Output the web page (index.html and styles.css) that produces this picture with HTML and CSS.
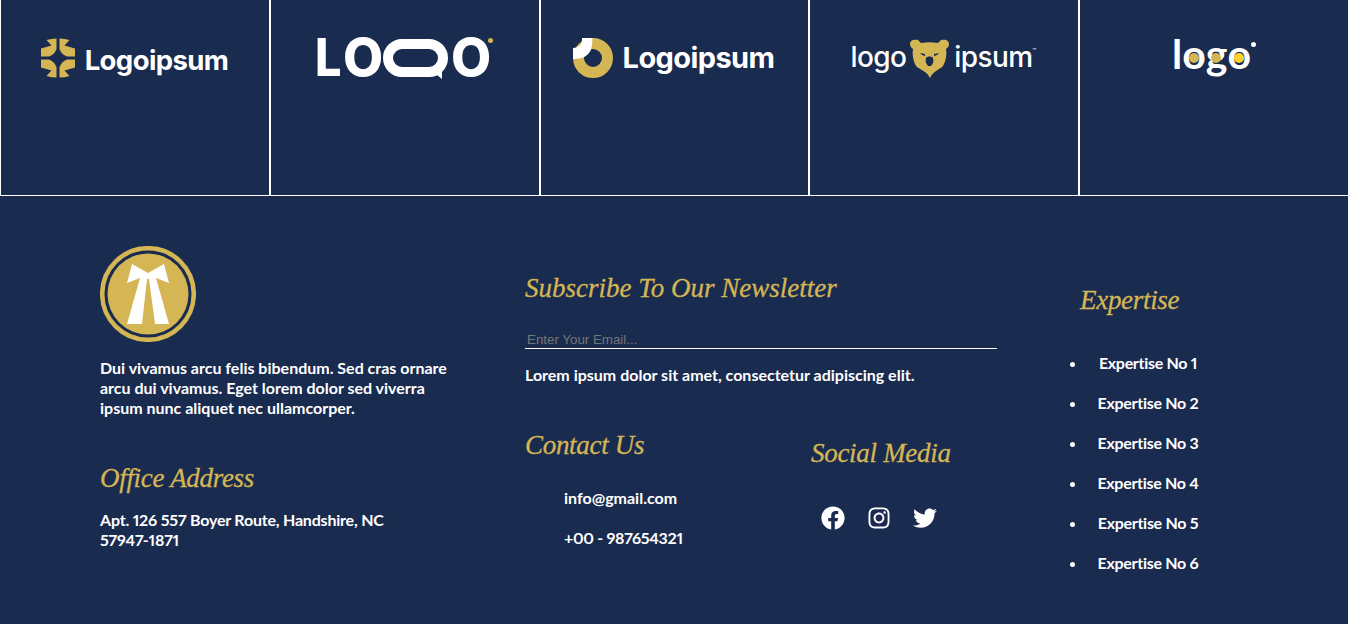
FILE: index.html
```html
<!DOCTYPE html>
<html lang="en">
<head>
  <meta charset="UTF-8">
  <meta name="viewport" content="width=device-width, initial-scale=1.0">
  <title>Footer</title>
  <link rel="stylesheet" href="styles.css">
</head>
<body>
  <!-- Partner logos -->
  <section class="logo-row">
    <div class="logo-cell">
      <div class="logo logo-one">
        <svg class="mark-one" viewBox="-18 -20 36 40">
          <g fill="#d4b654">
            <path id="petal" d="M-17-9.500-6.500-12.500-11.500-18Q-7-19.500-1.500-19.500L-1.500-9Q-3.500-3.500-9-1.500L-17-1.500Z"/>
            <use href="#petal" transform="scale(-1,1)"/>
            <use href="#petal" transform="scale(1,-1)"/>
            <use href="#petal" transform="scale(-1,-1)"/>
          </g>
        </svg>
        <span class="logo-word word-one">Logoipsum</span>
      </div>
    </div>
    <div class="logo-cell">
      <div class="logo logo-two">
        <span class="loqo-l">L</span><span class="loqo-o">O</span><span class="loqo-q"></span><span class="loqo-o">O</span>
        <i class="loqo-dot"></i>
      </div>
    </div>
    <div class="logo-cell">
      <div class="logo logo-three">
        <svg class="mark-three" viewBox="0 0 40 40">
          <circle cx="20" cy="20" r="14.5" fill="none" stroke="#d4b654" stroke-width="11"/>
          <path d="M0 10 0 21C5 21 11 20 14 17 18 14 19 10 19.500 0L9 0C9 3 9 5 7 7 5 9 3 10 0 10Z" fill="#fff"/>
        </svg>
        <span class="logo-word word-three">Logoipsum</span>
      </div>
    </div>
    <div class="logo-cell">
      <div class="logo logo-four">
        <span class="logo-word word-four">logo</span>
        <svg class="mark-four" viewBox="0 0 39 39">
          <path d="M0 5C0 1 4 0 8 1L11 4C17 3 22 3 28 4L31 1C35 0 39 1 39 5 39 8 37 9 36 10 37 15 36 22 33 27 29 31 23 32 20 39 17 32 10 31 6 27 3 22 2 15 3 10 2 9 0 8 0 5Z" fill="#d4b654"/>
          <path d="M10 14 15 15 15 17 12 16ZM29 14 24 15 24 17 27 16ZM16 19C17 17 22 17 23 19 24 22 23 25 21 27L18 27C16 25 15 22 16 19Z" fill="#1a2b50"/>
        </svg>
        <span class="logo-word word-four">ipsum<sup class="tm">™</sup></span>
      </div>
    </div>
    <div class="logo-cell">
      <div class="logo logo-five">
        <span class="word-five">l<span class="egg">o</span><span class="egg egg-g">g</span><span class="egg egg-yellow">o</span></span>
        <i class="five-dot"></i>
      </div>
    </div>
  </section>

  <footer class="site-footer">
    <div class="about-col">
      <svg class="emblem" viewBox="0 0 96 96">
        <circle cx="48" cy="48" r="45.800" fill="none" stroke="#d4b654" stroke-width="4.500"/>
        <circle cx="48" cy="48" r="40.500" fill="#d4b654"/>
        <path d="M32 18 48 27 64 18 69 37 56 32 69 78 55 78 49 33 47 33 42 78 27 78 40 32 27 37Z" fill="#fff"/>
      </svg>
      <p class="about-text">Dui vivamus arcu felis bibendum. Sed cras ornare arcu dui vivamus. Eget lorem dolor sed viverra ipsum nunc aliquet nec ullamcorper.</p>
      <h3 class="gold-title office-title">Office Address</h3>
      <p class="about-text address-text">Apt. 126 557 Boyer Route, Handshire, NC 57947-1871</p>
    </div>

    <div class="middle-col">
      <h3 class="gold-title news-title">Subscribe To Our Newsletter</h3>
      <form class="news-form">
        <input class="news-input" type="email" placeholder="Enter Your Email...">
      </form>
      <p class="news-text">Lorem ipsum dolor sit amet, consectetur adipiscing elit.</p>
      <div class="middle-bottom">
        <div class="contact-col">
          <h3 class="gold-title">Contact Us</h3>
          <ul class="contact-list">
            <li>info@gmail.com</li>
            <li class="phone">+00 - 987654321</li>
          </ul>
        </div>
        <div class="social-col">
          <h3 class="gold-title">Social Media</h3>
          <div class="social-icons">
            <svg viewBox="0 0 512 512"><path d="M504 256C504 119 393 8 256 8S8 119 8 256c0 123.78 90.69 226.38 209.25 245V327.69h-63V256h63v-54.64c0-62.15 37-96.48 93.67-96.48 27.14 0 55.52 4.84 55.52 4.84v61h-31.28c-30.8 0-40.41 19.12-40.41 38.73V256h68.78l-11 71.69h-57.78V501C413.31 482.38 504 379.78 504 256z"/></svg>
            <svg viewBox="0 0 448 512"><path d="M224.1 141c-63.6 0-114.9 51.3-114.9 114.9s51.3 114.9 114.9 114.9S339 319.5 339 255.9 287.7 141 224.1 141zm0 189.6c-41.1 0-74.7-33.5-74.7-74.7s33.5-74.7 74.7-74.7 74.7 33.5 74.7 74.7-33.6 74.7-74.7 74.7zm146.4-194.3c0 14.9-12 26.8-26.8 26.8-14.9 0-26.8-12-26.8-26.8s12-26.8 26.8-26.8 26.8 12 26.8 26.8zm76.1 27.2c-1.7-35.9-9.9-67.7-36.2-93.9-26.2-26.2-58-34.4-93.9-36.2-37-2.1-147.9-2.1-184.9 0-35.8 1.7-67.6 9.9-93.9 36.1s-34.4 58-36.2 93.9c-2.1 37-2.1 147.9 0 184.9 1.7 35.9 9.9 67.7 36.2 93.9s58 34.4 93.9 36.2c37 2.1 147.9 2.1 184.9 0 35.9-1.7 67.7-9.9 93.9-36.2 26.2-26.2 34.4-58 36.2-93.9 2.1-37 2.1-147.8 0-184.8zM398.8 388c-7.8 19.6-22.9 34.7-42.6 42.6-29.5 11.7-99.5 9-132.1 9s-102.7 2.6-132.1-9c-19.6-7.8-34.7-22.9-42.6-42.6-11.7-29.5-9-99.5-9-132.1s-2.6-102.7 9-132.1c7.8-19.6 22.9-34.7 42.6-42.6 29.5-11.7 99.5-9 132.1-9s102.7-2.6 132.1 9c19.6 7.8 34.7 22.9 42.6 42.6 11.7 29.5 9 99.5 9 132.1s2.7 102.7-9 132.1z"/></svg>
            <svg viewBox="0 0 512 512"><path d="M459.37 151.716c.325 4.548.325 9.097.325 13.645 0 138.72-105.583 298.558-298.558 298.558-59.452 0-114.68-17.219-161.137-47.106 8.447.974 16.568 1.299 25.34 1.299 49.055 0 94.213-16.568 130.274-44.832-46.132-.975-84.792-31.188-98.112-72.772 6.498.974 12.995 1.624 19.818 1.624 9.421 0 18.843-1.3 27.614-3.573-48.081-9.747-84.143-51.98-84.143-102.985v-1.299c13.969 7.797 30.214 12.67 47.431 13.319-28.264-18.843-46.781-51.005-46.781-82.91 0-19.492 5.197-37.36 14.294-52.954 51.655 63.675 129.3 105.258 216.365 109.807-1.624-7.797-2.599-15.918-2.599-24.04 0-57.828 46.782-104.934 104.934-104.934 30.213 0 57.502 12.67 76.67 33.137 23.715-4.548 46.456-13.32 66.599-25.34-7.798 24.366-24.366 43.833-46.132 56.827 21.117-2.273 41.584-8.122 60.426-16.243-14.292 20.791-32.161 39.308-52.628 54.253z"/></svg>
          </div>
        </div>
      </div>
    </div>

    <div class="expertise-col">
      <h3 class="gold-title">Expertise</h3>
      <ul class="expertise-list">
        <li>Expertise No 1</li>
        <li>Expertise No 2</li>
        <li>Expertise No 3</li>
        <li>Expertise No 4</li>
        <li>Expertise No 5</li>
        <li>Expertise No 6</li>
      </ul>
    </div>
  </footer>
</body>
</html>
```

FILE: styles.css
```css
* {
  box-sizing: border-box;
}
body {
  margin: 0;
  background-color: #1a2b50;
  color: #fff;
  font-family: 'Lato', sans-serif;
  font-variant-numeric: proportional-nums;
  overflow: hidden;
}

/* Logo row */
.logo-row {
  display: grid;
  grid-template-columns: 270px 270px 269px 270px 269px;
  height: 196px;
}
.logo-cell {
  border-left: 1px solid #fff;
  border-right: 1px solid #fff;
  border-bottom: 1px solid #fff;
  padding-top: 38px;
  display: flex;
  justify-content: center;
}
.logo-cell:last-child {
  border-right: none;
}
.logo {
  display: flex;
  align-items: center;
  height: 40px;
  position: relative;
}
.logo-one,
.logo-three,
.logo-four {
  margin-left: -2px;
}
.logo-word {
  font-family: 'Inter', sans-serif;
  font-weight: 700;
  color: #fff;
  line-height: 40px;
}
.mark-one {
  width: 36px;
  height: 40px;
  margin-right: 9px;
}
.word-one {
  font-size: 27.500px;
  letter-spacing: -0.6px;
  padding-top: 4px;
}
.logo-two {
  font-family: 'Inter', sans-serif;
  font-weight: 800;
  font-size: 52px;
  line-height: 40px;
  width: 176px;
}
.loqo-l {
  width: 26px;
  margin-left: -2px;
  margin-right: 2px;
  transform: scaleX(0.9);
  transform-origin: left center;
}
.loqo-o {
  width: 38px;
  text-align: center;
}
.loqo-q {
  position: relative;
  width: 65px;
  height: 38px;
  margin: 0 3px 0 2px;
  border: 10px solid #fff;
  border-radius: 19px;
}
/* tail of the speech bubble */
.loqo-q::after {
  content: "";
  position: absolute;
  right: -4px;
  bottom: -12px;
  width: 0;
  height: 0;
  border-top: 8px solid #fff;
  border-left: 10px solid transparent;
}
.loqo-dot {
  position: absolute;
  top: 0;
  right: 0;
  width: 5px;
  height: 5px;
  border-radius: 50%;
  background-color: #d4b654;
}
.mark-three {
  width: 40px;
  height: 40px;
  margin-right: 10px;
}
.word-three {
  font-size: 29px;
  letter-spacing: -0.6px;
}
.word-four {
  font-weight: 500;
  font-size: 28px;
  letter-spacing: -0.6px;
  margin-top: -2px;
}
.mark-four {
  width: 39px;
  height: 39px;
  margin: 0 5px 0 4px;
}
.tm {
  font-size: 6px;
  line-height: 0;
  vertical-align: 14px;
}
.word-five {
  font-family: 'Lato', sans-serif;
  font-weight: 700;
  font-size: 41px;
  line-height: 40px;
  margin-top: -9px;
}
.egg {
  position: relative;
}
.egg::after {
  content: "";
  position: absolute;
  left: 50%;
  top: 61%;
  width: 10px;
  height: 10px;
  margin: -5px 0 0 -5px;
  border-radius: 50%;
  background-color: #d4b654;
}
.egg-g::after {
  left: 46%;
}
.egg-yellow::after {
  background-color: #fdd22f;
}
.five-dot {
  width: 5px;
  height: 5px;
  margin: -28px 0 0 0;
  border-radius: 50%;
  background-color: #fff;
}

/* Footer */
.site-footer {
  display: flex;
  padding: 50px 0 0 100px;
  height: 428px;
}
.gold-title {
  margin: 0;
  font-family: 'Liberation Serif', serif;
  font-style: italic;
  font-weight: 400;
  font-size: 27px;
  letter-spacing: -0.3px;
  line-height: 34px;
  color: #d4b654;
  -webkit-text-stroke: 0.3px #d4b654;
}
.news-title {
  letter-spacing: 0;
}
.about-col {
  width: 425px;
  padding-right: 75px;
}
.emblem {
  display: block;
  width: 96px;
  height: 96px;
  margin-bottom: 16px;
}
.about-text {
  margin: 0;
  font-size: 16px;
  font-weight: 700;
  line-height: 20px;
}
.address-text {
  max-width: 300px;
  letter-spacing: -0.2px;
}
.office-title {
  margin: 43px 0 15px;
}
.middle-col {
  width: 472px;
  padding-top: 25px;
}
.news-form {
  margin-top: 24px;
}
.news-input {
  display: block;
  width: 100%;
  height: 20px;
  padding: 1px 2px 0;
  background: transparent;
  border: none;
  border-bottom: 1px solid #fff;
  outline: none;
  font-family: 'Liberation Sans', sans-serif;
  font-size: 13.330px;
  color: #fff;
}
.news-input::placeholder {
  color: #757575;
}
.news-text {
  margin: 16px 0 0;
  font-size: 16px;
  font-weight: 700;
  line-height: 20px;
}
.middle-bottom {
  display: flex;
  margin-top: 43px;
}
.contact-col {
  width: 286px;
}
.contact-list {
  list-style: none;
  margin: 26px 0 0;
  padding: 0 0 0 39px;
  font-size: 16px;
  font-weight: 700;
  line-height: 20px;
}
.contact-list li {
  margin-bottom: 20px;
}
.contact-list .phone {
  letter-spacing: -0.3px;
}
.social-col {
  padding-top: 8px;
}
.social-icons {
  display: flex;
  gap: 22px;
  margin: 36px 0 0 9.500px;
}
.social-icons svg {
  width: 24px;
  height: 24px;
  fill: #fff;
}
.expertise-col {
  margin-left: 83px;
  padding-top: 37px;
}
.expertise-list {
  margin: 36px 0 0;
  padding: 0 0 0 7px;
  width: 129px;
  font-size: 16px;
  font-weight: 700;
  line-height: 20px;
  letter-spacing: -0.3px;
  text-align: center;
}
.expertise-list li {
  margin-bottom: 20px;
}
```
